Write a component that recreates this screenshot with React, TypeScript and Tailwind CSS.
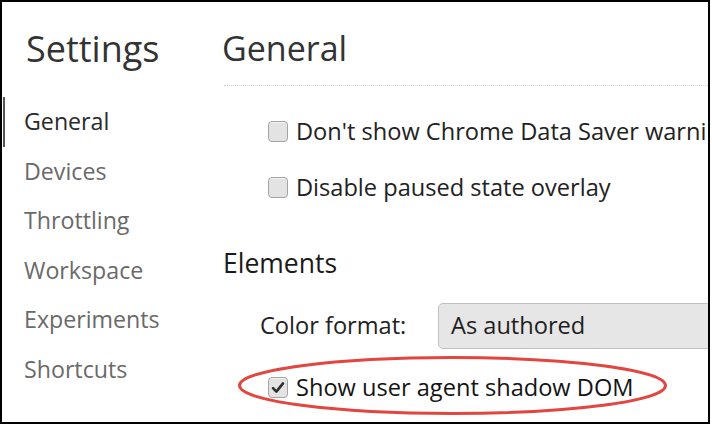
import React from 'react';

const navItems = ['General', 'Devices', 'Throttling', 'Workspace', 'Experiments', 'Shortcuts'];

function Checkbox({ checked = false }: { checked?: boolean }) {
  return (
    <span className="flex h-[21px] w-[20px] shrink-0 items-center justify-center rounded-[4px] border border-[#a3a3a3] bg-[#e3e3e3] shadow-[inset_0_1px_0_#f4f4f4]">
      {checked && (
        <svg width="14" height="13" viewBox="0 0 14 13">
          <path d="M2 7.2 L5.4 10.6 L12 2.4" fill="none" stroke="#2f2f2f" strokeWidth="2.6" strokeLinecap="round" strokeLinejoin="round" />
        </svg>
      )}
    </span>
  );
}

function CheckRow({ label, checked }: { label: string; checked?: boolean }) {
  return (
    <div className="flex h-[56px] items-center gap-[8px] pl-[46px] text-[23.6px] leading-[56px] text-[#222]">
      <Checkbox checked={checked} />
      <span>{label}</span>
    </div>
  );
}

export default function App() {
  return (
    <div className="flex h-[424px] w-[710px] overflow-hidden border-2 border-black bg-white font-['Open_Sans',sans-serif] whitespace-nowrap">
      {/* sidebar */}
      <div className="flex w-[220px] shrink-0 flex-col pt-[29px]">
        <h1 className="pl-[24px] text-[36px] leading-[36px] text-[#333]">Settings</h1>
        <nav className="mt-[30px] flex flex-col">
          {navItems.map((item, i) => (
            <div
              key={item}
              className={
                i === 0
                  ? 'ml-[1px] h-[49.6px] border-l-2 border-[#555] pl-[19px] text-[23.2px] leading-[49.6px] text-[#2a2a2a]'
                  : 'ml-[1px] h-[49.6px] border-l-2 border-transparent pl-[19px] text-[23.2px] leading-[49.6px] text-[#6a6a6a]'
              }
            >
              {item}
            </div>
          ))}
        </nav>
      </div>

      {/* main panel */}
      <div className="flex min-w-0 flex-1 flex-col pt-[29px]">
        <h2 className="text-[34px] leading-[34px] text-[#333]">General</h2>
        <div className="ml-[2px] mt-[20px] border-t border-dotted border-[#cfcfcf]" />

        <div className="mt-[17px]">
          <CheckRow label="Don't show Chrome Data Saver warning" />
          <CheckRow label="Disable paused state overlay" />
        </div>

        <h3 className="mt-[33px] pl-[1px] text-[26.5px] leading-[30px] text-[#1a1a1a]">Elements</h3>

        <div className="mt-[25px] flex items-center pl-[38px]">
          <span className="w-[178px] shrink-0 text-[23.6px] text-[#222]">Color format:</span>
          <div className="flex h-[46px] w-[320px] shrink-0 items-center rounded-[5px] border border-[#c2bfbf] bg-[#e6e6e6] pl-[12px] text-[23.6px] text-[#1e1e1e]">
            As authored
          </div>
        </div>

        <div className="relative mt-[24px] flex h-[28px] items-center gap-[8px] pl-[46px] text-[23.6px] leading-[28px] text-[#141414]">
          <Checkbox checked />
          <span>Show user agent shadow DOM</span>
          <svg className="pointer-events-none absolute left-[14px] top-[-19px]" width="434" height="64" viewBox="0 0 434 64">
            <ellipse cx="216.5" cy="31.5" rx="213" ry="28" fill="none" stroke="#e2463f" strokeWidth="3" />
          </svg>
        </div>
      </div>
    </div>
  );
}
